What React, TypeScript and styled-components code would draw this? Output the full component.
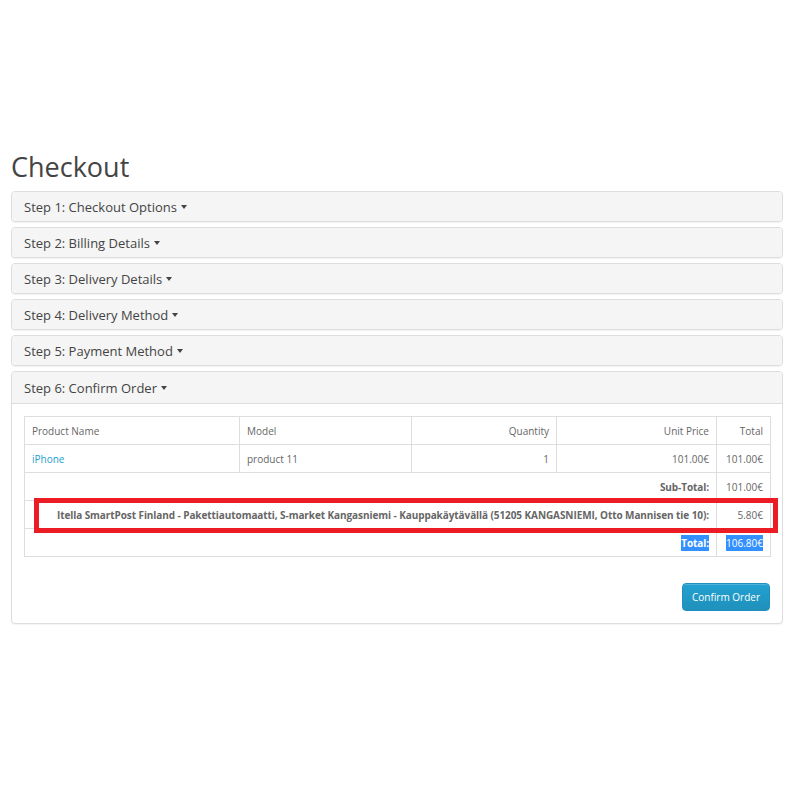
import React from "react";
import styled, { createGlobalStyle } from "styled-components";

const Global = createGlobalStyle`
  html, body { margin: 0; padding: 0; background: #fff; }
  body { font-family: "Open Sans", "DejaVu Sans", sans-serif; color: #666; }
  * { box-sizing: border-box; }
`;

const Page = styled.div`
  width: 800px;
  height: 800px;
  padding: 149px 17px 0 11px;
`;

const Title = styled.h1`
  margin: 0 0 6px 0;
  font-size: 27px;
  font-weight: 400;
  line-height: 36px;
  color: #444;
`;

const Accordion = styled.div`
  display: flex;
  flex-direction: column;
  gap: 5px;
`;

const Panel = styled.div`
  border: 1px solid #ddd;
  border-radius: 4px;
  background: #fff;
  box-shadow: 0 1px 1px rgba(0, 0, 0, 0.05);
  overflow: hidden;
`;

const PanelHeading = styled.div<{ $open?: boolean }>`
  background: #f5f5f5;
  height: ${(p) => (p.$open ? 32 : 29)}px;
  padding: 0 12px;
  display: flex;
  align-items: center;
  font-size: 13px;
  color: #444;
  border-bottom: ${(p) => (p.$open ? "1px solid #ddd" : "none")};
`;

const Caret = styled.span`
  display: inline-block;
  width: 0;
  height: 0;
  margin-left: 4px;
  margin-top: 1px;
  border-top: 4px solid #444;
  border-left: 3.5px solid transparent;
  border-right: 3.5px solid transparent;
`;

const PanelBody = styled.div`
  padding: 12px 12px 12px 12px;
  display: flex;
  flex-direction: column;
`;

const TableWrap = styled.div`
  position: relative;
`;

const Table = styled.table`
  width: 100%;
  border-collapse: collapse;
  font-size: 10px;
  color: #666;
  table-layout: fixed;
`;

const Cell = styled.td<{ $align?: string; $bold?: boolean }>`
  border: 1px solid #ddd;
  height: 28px;
  padding: 0 7px;
  text-align: ${(p) => p.$align || "left"};
  font-weight: ${(p) => (p.$bold ? 700 : 400)};
  letter-spacing: ${(p) => (p.$bold ? "-0.08px" : "0")};
  white-space: nowrap;
`;

const Link = styled.a`
  color: #23a1d1;
  text-decoration: none;
`;

const Selected = styled.span`
  background: #3390ff;
  color: #fff;
  padding: 1px 0;
`;

const Highlight = styled.div`
  position: absolute;
  left: 10px;
  top: 82px;
  width: 744px;
  height: 35px;
  border: 5px solid #ec1c24;
  pointer-events: none;
`;

const Actions = styled.div`
  display: flex;
  justify-content: flex-end;
  margin-top: 26px;
`;

const Button = styled.button`
  font-family: inherit;
  font-size: 10px;
  color: #fff;
  height: 28px;
  padding: 0 9px;
  border: 1px solid #1f90bb;
  border-radius: 4px;
  background: linear-gradient(#23a1d1, #1f90bb);
  box-shadow: inset 0 1px 0 rgba(255, 255, 255, 0.2);
  cursor: pointer;
`;

const steps = [
  "Step 1: Checkout Options",
  "Step 2: Billing Details",
  "Step 3: Delivery Details",
  "Step 4: Delivery Method",
  "Step 5: Payment Method",
];

export default function App() {
  return (
    <>
      <Global />
      <Page>
        <Title>Checkout</Title>
        <Accordion>
          {steps.map((s) => (
            <Panel key={s}>
              <PanelHeading>
                {s}
                <Caret />
              </PanelHeading>
            </Panel>
          ))}
          <Panel>
            <PanelHeading $open>
              Step 6: Confirm Order
              <Caret />
            </PanelHeading>
            <PanelBody>
              <TableWrap>
                <Table>
                  <colgroup>
                    <col style={{ width: 215 }} />
                    <col style={{ width: 172 }} />
                    <col style={{ width: 145 }} />
                    <col style={{ width: 160 }} />
                    <col style={{ width: 54 }} />
                  </colgroup>
                  <tbody>
                    <tr>
                      <Cell>Product Name</Cell>
                      <Cell>Model</Cell>
                      <Cell $align="right">Quantity</Cell>
                      <Cell $align="right">Unit Price</Cell>
                      <Cell $align="right">Total</Cell>
                    </tr>
                    <tr>
                      <Cell>
                        <Link href="#">iPhone</Link>
                      </Cell>
                      <Cell>product 11</Cell>
                      <Cell $align="right">1</Cell>
                      <Cell $align="right">101.00€</Cell>
                      <Cell $align="right">101.00€</Cell>
                    </tr>
                    <tr>
                      <Cell colSpan={4} $align="right" $bold>
                        Sub-Total:
                      </Cell>
                      <Cell $align="right">101.00€</Cell>
                    </tr>
                    <tr>
                      <Cell colSpan={4} $align="right" $bold>
                        Itella SmartPost Finland - Pakettiautomaatti, S-market Kangasniemi - Kauppakäytävällä (51205 KANGASNIEMI, Otto Mannisen tie 10):
                      </Cell>
                      <Cell $align="right">5.80€</Cell>
                    </tr>
                    <tr>
                      <Cell colSpan={4} $align="right" $bold>
                        <Selected>Total:</Selected>
                      </Cell>
                      <Cell $align="right">
                        <Selected>106.80€</Selected>
                      </Cell>
                    </tr>
                  </tbody>
                </Table>
                <Highlight />
              </TableWrap>
              <Actions>
                <Button>Confirm Order</Button>
              </Actions>
            </PanelBody>
          </Panel>
        </Accordion>
      </Page>
    </>
  );
}
